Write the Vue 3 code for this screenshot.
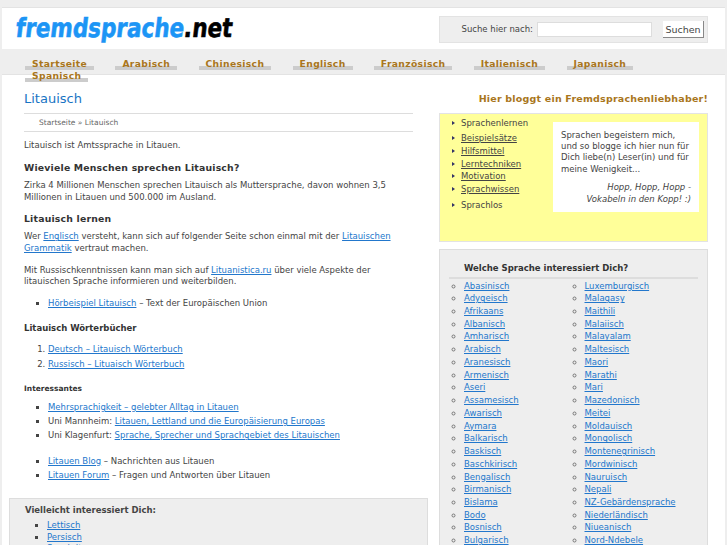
<template>
  <div class="page">
    <header class="head">
      <div class="logo"><span class="blue">fremdsprache</span>.net</div>
      <form class="search" @submit.prevent>
        <label>Suche hier nach:</label>
        <input class="field" type="text">
        <button class="go" type="button">Suchen</button>
      </form>
    </header>
    <nav class="nav">
      <a v-for="n in nav" :key="n">{{ n }}</a>
    </nav>
    <div class="body">
      <main class="main">
        <h1>Litauisch</h1>
        <div class="crumb">Startseite » Litauisch</div>
        <p class="first">Litauisch ist Amtssprache in Litauen.</p>
        <h2>Wieviele Menschen sprechen Litauisch?</h2>
        <p class="after-head">Zirka 4 Millionen Menschen sprechen Litauisch als Muttersprache, davon wohnen 3,5 Millionen in Litauen und 500.000 im Ausland.</p>
        <h2>Litauisch lernen</h2>
        <p>Wer <a>Englisch</a> versteht, kann sich auf folgender Seite schon einmal mit der <a>Litauischen Grammatik</a> vertraut machen.</p>
        <p>Mit Russischkenntnissen kann man sich auf <a>Lituanistica.ru</a> über viele Aspekte der litauischen Sprache informieren und weiterbilden.</p>
        <ul class="audio">
          <li><a>Hörbeispiel Litauisch</a> – Text der Europäischen Union</li>
        </ul>
        <h3>Litauisch Wörterbücher</h3>
        <ol>
          <li><a>Deutsch – Litauisch Wörterbuch</a></li>
          <li><a>Russisch – Lituaisch Wörterbuch</a></li>
        </ol>
        <h4>Interessantes</h4>
        <ul class="links">
          <li><a>Mehrsprachigkeit  – gelebter Alltag in Litauen</a></li>
          <li>Uni Mannheim: <a>Litauen, Lettland und die Europäisierung Europas</a></li>
          <li>Uni Klagenfurt: <a>Sprache, Sprecher und Sprachgebiet des Litauischen</a></li>
        </ul>
        <ul>
          <li><a>Litauen Blog</a> – Nachrichten aus Litauen</li>
          <li><a>Litauen Forum</a> – Fragen und Antworten über Litauen</li>
        </ul>
        <section class="more">
          <strong>Vielleicht interessiert Dich:</strong>
          <ul>
            <li><a>Lettisch</a></li>
            <li><a>Persisch</a></li>
            <li><a>Sanskrit</a></li>
          </ul>
        </section>
      </main>
      <aside class="side">
        <h2 class="claim">Hier bloggt ein Fremdsprachenliebhaber!</h2>
        <div class="yellow">
          <ul class="topics">
            <li class="top">Sprachenlernen</li>
            <li><a>Beispielsätze</a></li>
            <li><a>Hilfsmittel</a></li>
            <li><a>Lerntechniken</a></li>
            <li><a>Motivation</a></li>
            <li class="gap"><a>Sprachwissen</a></li>
            <li>Sprachlos</li>
          </ul>
          <div class="note">
            <p>Sprachen begeistern mich, und so blogge ich hier nun für Dich liebe(n) Leser(in) und für meine Wenigkeit...</p>
            <p class="motto">Hopp, Hopp, Hopp -<br>Vokabeln in den Kopp! :)</p>
          </div>
        </div>
        <div class="langs">
          <h3>Welche Sprache interessiert Dich?</h3>
          <ul class="grid">
            <li v-for="l in langs" :key="l"><a>{{ l }}</a></li>
          </ul>
        </div>
      </aside>
    </div>
  </div>
</template>

<script setup>
const nav = ['Startseite', 'Arabisch', 'Chinesisch', 'Englisch', 'Französisch', 'Italienisch', 'Japanisch', 'Spanisch']

const langs = [
  'Abasinisch', 'Luxemburgisch', 'Adygeisch', 'Malagasy', 'Afrikaans', 'Maithili',
  'Albanisch', 'Malaiisch', 'Amharisch', 'Malayalam', 'Arabisch', 'Maltesisch',
  'Aranesisch', 'Maori', 'Armenisch', 'Marathi', 'Aseri', 'Mari',
  'Assamesisch', 'Mazedonisch', 'Awarisch', 'Meitei', 'Aymara', 'Moldauisch',
  'Balkarisch', 'Mongolisch', 'Baskisch', 'Montenegrinisch', 'Baschkirisch', 'Mordwinisch',
  'Bengalisch', 'Nauruisch', 'Birmanisch', 'Nepali', 'Bislama', 'NZ-Gebärdensprache',
  'Bodo', 'Niederländisch', 'Bosnisch', 'Niueanisch', 'Bulgarisch', 'Nord-Ndebele'
]
</script>

<style>
html, body {
  margin: 0;
  height: 100%;
  overflow: hidden;
  background: #eee;
}
</style>

<style scoped>
.page {
  height: 545px;
  overflow: hidden;
  font-family: "DejaVu Sans", sans-serif;
  font-size: 8.5px;
  line-height: 11.4px;
  color: #444;
  padding-top: 7px;
  box-sizing: border-box;
}
a {
  color: #2277cc;
  text-decoration: underline;
}
.head {
  display: flex;
  justify-content: space-between;
  align-items: center;
  height: 42px;
  background: #fff;
  border-top: 1px solid #e3e3e3;
  margin: 0 2px;
  padding: 0 17px 0 14px;
  box-sizing: border-box;
}
.logo {
  font-weight: bold;
  font-size: 25px;
  line-height: 30px;
  color: #000;
  white-space: nowrap;
  -webkit-text-stroke: 0.6px currentColor;
  transform: scale(0.86, 1.05) skewX(-8deg);
  transform-origin: left center;
}
.blue {
  color: #1c95f5;
}
.search {
  display: flex;
  align-items: center;
  justify-content: flex-end;
  width: 269px;
  height: 27px;
  margin-top: 2px;
  box-sizing: border-box;
  background: #eee;
  border: 1px solid #e3e3e3;
  padding-right: 3px;
}
.field {
  width: 115px;
  height: 15px;
  box-sizing: border-box;
  border: 1px solid #ddd;
  background: #fff;
  margin: 0 11px 0 4px;
  padding: 0;
}
.go {
  font: 9.5px "DejaVu Sans", sans-serif;
  color: #444;
  height: 17px;
  width: 41px;
  padding: 0;
  background: #fff;
  border: 0;
  border-right: 1px solid #888;
  border-bottom: 1px solid #888;
}
.nav {
  display: flex;
  flex-wrap: wrap;
  height: 25px;
  padding: 9px 40px 0 25px;
  box-sizing: border-box;
  column-gap: 21.3px;
}
.nav a {
  font-size: 9.2px;
  letter-spacing: 0.35px;
  font-weight: bold;
  line-height: 11px;
  height: 8px;
  color: #a9761c;
  text-decoration: none;
  padding: 0 7px;
  border-bottom: 4px solid #ccc;
  position: relative;
  z-index: 1;
}
.body {
  display: flex;
  gap: 11px;
  background: #fff;
  border-top: 1px solid #e3e3e3;
  margin: 0 2px;
  padding: 0 17px 0 7px;
  height: 480px;
  box-sizing: border-box;
}
.main {
  width: 419px;
  flex: none;
}
h1 {
  font-size: 13px;
  font-weight: normal;
  line-height: 16px;
  color: #1874c4;
  margin: 16px 15px 6px;
}
.crumb {
  margin: 0 15px;
  padding: 4px 15px;
  border-top: 1px solid #ddd;
  border-bottom: 1px solid #ddd;
  font-size: 7.5px;
  line-height: 9px;
  color: #666;
}
p {
  margin: 0 15px 10.5px;
}
.first {
  margin-top: 8px;
  margin-bottom: 9.5px;
}
.after-head {
  margin-bottom: 8.5px;
}
h2 {
  font-size: 9.3px;
  letter-spacing: 0.2px;
  line-height: 13px;
  margin: 0 15px 6.5px;
  color: #333;
}
h3 {
  font-size: 8.5px;
  line-height: 12px;
  margin: 0 15px 10.5px;
  color: #333;
}
h4 {
  font-size: 7.5px;
  line-height: 10px;
  margin: 0 15px 8px;
  color: #333;
}
ul, ol {
  margin: 0 15px 17px;
  padding: 0 0 0 24px;
}
ul {
  list-style: square;
}
ol {
  margin-bottom: 13.5px;
}
ol li {
  margin-bottom: 3.3px;
}
li {
  margin-bottom: 2.8px;
}
li:last-child {
  margin-bottom: 0;
}
.audio {
  margin-bottom: 12.5px;
}
.links {
  margin-bottom: 14px;
}
.more {
  background: #eee;
  border: 1px solid #ddd;
  padding: 6px 15px;
}
.more ul {
  margin: 3.5px 0 0;
  padding-left: 22px;
}
.more li {
  margin-bottom: 0;
}
.side {
  width: 269px;
  flex: none;
}
.claim {
  color: #a9761c;
  text-align: right;
  font-size: 9.5px;
  margin: 16px 0 6px;
  line-height: 16px;
}
.yellow {
  display: flex;
  height: 129px;
  box-sizing: border-box;
  background: #ffff99;
  border: 1px solid #e3e3e3;
  padding: 4px 8px 0 0;
}
.topics {
  width: 113px;
  flex: none;
  margin: 0;
  padding: 0 0 0 12px;
  box-sizing: border-box;
  list-style: none;
  color: #444;
}
.topics li {
  margin-bottom: 1.4px;
}
.topics li::before {
  content: "";
  display: inline-block;
  border-left: 3px solid #336;
  border-top: 2.5px solid transparent;
  border-bottom: 2.5px solid transparent;
  margin-right: 6px;
  vertical-align: 1px;
}
.topics .top {
  margin-bottom: 3.6px;
}
.topics .gap {
  margin-bottom: 4.6px;
}
.topics a {
  color: #444;
}
.note {
  flex: 1;
  height: 90px;
  margin-top: 4px;
  background: #fff;
  padding: 7.5px 8px;
  box-sizing: border-box;
}
.note p {
  margin: 0 0 7px;
}
.note .motto {
  font-style: italic;
  text-align: right;
}
.langs {
  margin-top: 7px;
  background: #eee;
  border: 1px solid #ddd;
  padding: 12px 9px;
}
.langs h3 {
  margin: 0;
  padding: 0 0 3px 15px;
  border-bottom: 2px solid #ddd;
}
.grid {
  display: grid;
  grid-template-columns: 120.5px 1fr;
  row-gap: 1.33px;
  margin: 0;
  padding: 1.5px 0 0;
}
.grid li {
  margin: 0 0 0 15px;
  list-style: circle outside;
}
.grid li::marker {
  color: #777;
}
</style>
